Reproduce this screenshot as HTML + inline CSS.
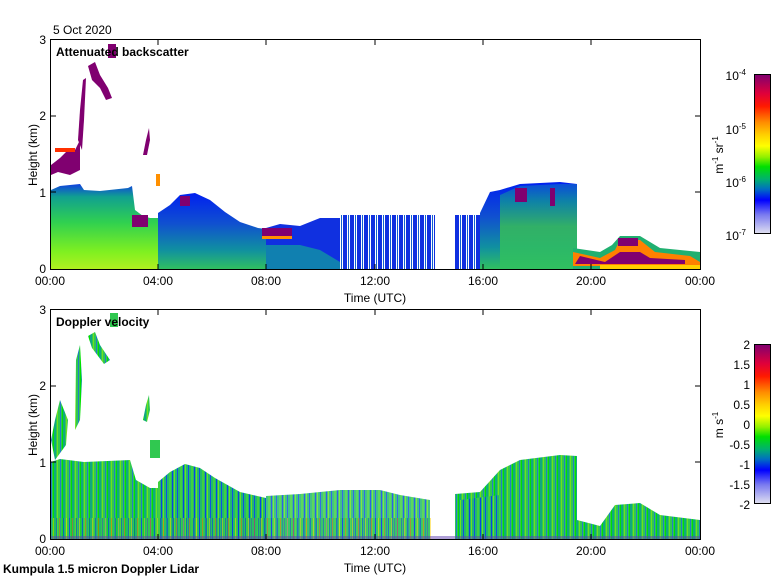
<!DOCTYPE html>
<html><head><meta charset="utf-8"><style>
html,body{margin:0;padding:0;background:#fff;width:780px;height:580px;overflow:hidden}
svg{display:block;font-family:"Liberation Sans",sans-serif}
</style></head><body>
<svg width="780" height="580" viewBox="0 0 780 580" xmlns="http://www.w3.org/2000/svg">
<defs>
<linearGradient id="cb" x1="0" y1="0" x2="0" y2="1">
<stop offset="0" stop-color="#800070"/><stop offset="0.12" stop-color="#e0003a"/><stop offset="0.2" stop-color="#ff1a00"/><stop offset="0.3" stop-color="#ff8c00"/><stop offset="0.38" stop-color="#ffd000"/><stop offset="0.45" stop-color="#ffff00"/><stop offset="0.52" stop-color="#90f000"/><stop offset="0.58" stop-color="#00e000"/><stop offset="0.66" stop-color="#00b070"/><stop offset="0.72" stop-color="#0070c0"/><stop offset="0.79" stop-color="#0000ff"/><stop offset="0.88" stop-color="#7878f0"/><stop offset="1" stop-color="#e0e0f0"/>
</linearGradient>
<linearGradient id="g1" x1="0" y1="0" x2="0" y2="1">
<stop offset="0" stop-color="#1040e0"/><stop offset="0.15" stop-color="#10a090"/><stop offset="0.45" stop-color="#30d050"/><stop offset="0.8" stop-color="#80f020"/><stop offset="1" stop-color="#b0f020"/>
</linearGradient>
<linearGradient id="g2" x1="0" y1="0" x2="0" y2="1">
<stop offset="0" stop-color="#0020f0"/><stop offset="0.4" stop-color="#1050d0"/><stop offset="0.75" stop-color="#1090a0"/><stop offset="1" stop-color="#30c060"/>
</linearGradient>
<linearGradient id="g3" x1="0" y1="0" x2="0" y2="1">
<stop offset="0" stop-color="#1060d0"/><stop offset="0.2" stop-color="#10a090"/><stop offset="0.5" stop-color="#40d040"/><stop offset="1" stop-color="#30c060"/>
</linearGradient>
<pattern id="sparse" width="7" height="230" patternUnits="userSpaceOnUse">
<rect width="4" height="230" fill="#1030e0"/>
<rect x="5" width="1" height="230" fill="#1060d0"/>
</pattern>
<pattern id="st" width="9" height="230" patternUnits="userSpaceOnUse">
<rect width="9" height="230" fill="#30c850"/>
<rect x="0" width="2" height="230" fill="#10a880"/>
<rect x="3" width="1" height="230" fill="#70e020"/>
<rect x="6" width="1" height="230" fill="#2080c0"/>
<rect x="8" width="1" height="230" fill="#00e000"/>
</pattern>
<pattern id="st2" width="11" height="230" patternUnits="userSpaceOnUse">
<rect width="11" height="230" fill="#20b870"/>
<rect x="1" width="1" height="230" fill="#1050e0"/>
<rect x="4" width="2" height="230" fill="#40d040"/>
<rect x="7" width="1" height="230" fill="#1040e0"/>
<rect x="9" width="1" height="230" fill="#70e020"/>
</pattern>
<pattern id="lowb" width="13" height="10" patternUnits="userSpaceOnUse">
<rect width="13" height="10" fill="#30c850"/>
<rect x="1" width="1" height="10" fill="#ffd000"/>
<rect x="4" width="1" height="10" fill="#0030f0"/>
<rect x="7" width="1" height="10" fill="#ff6000"/>
<rect x="11" width="1" height="10" fill="#0030f0"/>
</pattern>
</defs>

<!-- TOP PLOT -->
<text x="53" y="34" font-size="12">5 Oct 2020</text>
<g>
<polygon points="51,269 51,190 60,186 80,184 84,190 100,191 128,188 132,186 135,210 143,216 150,218 158,218 158,269" fill="url(#g1)"/>
<polygon points="158,269 158,213 170,205 180,195 195,193 210,200 225,212 240,222 258,228 266,229 266,269" fill="url(#g2)"/>
<polygon points="266,269 266,228 280,224 300,226 320,218 340,218 340,269" fill="#1030e0"/>
<polygon points="266,269 266,245 300,245 320,250 340,262 340,269" fill="#1080b0"/>
<rect x="340" y="215" width="95" height="54" fill="url(#sparse)"/>
<rect x="262" y="228" width="30" height="8" fill="#800070"/>
<rect x="262" y="236" width="30" height="3" fill="#ff9000"/>
<rect x="455" y="215" width="30" height="54" fill="url(#sparse)"/>
<polygon points="480,269 480,213 490,192 500,190 520,184 560,182 577,184 577,269" fill="url(#g2)"/>
<polygon points="500,269 500,195 520,186 560,184 577,184 577,269" fill="url(#g3)" opacity="0.7"/>
<rect x="515" y="188" width="12" height="14" fill="#800070"/>
<rect x="550" y="188" width="5" height="18" fill="#800070"/>
<polygon points="573,269 573,248 600,252 612,245 620,236 640,236 660,248 700,252 700,269" fill="#20b070"/>
<polygon points="573,266 573,252 600,258 615,250 620,240 640,240 655,252 690,256 700,262 700,266" fill="#ff8000"/>
<polygon points="575,264 580,256 605,262 620,252 640,252 650,258 685,260 685,264" fill="#800070"/>
<rect x="618" y="238" width="20" height="8" fill="#800070"/>
<rect x="600" y="265" width="100" height="4" fill="#ffd000"/>
<polygon points="51,165 60,158 66,152 75,150 80,140 80,170 70,175 58,172 51,175" fill="#800070"/>
<rect x="55" y="148" width="20" height="4" fill="#ff3000"/>
<polygon points="78,140 80,110 83,80 86,78 84,120 82,150" fill="#800070"/>
<polygon points="88,66 95,62 100,75 108,88 112,98 106,100 100,88 92,80" fill="#800070"/>
<rect x="108" y="44" width="8" height="14" fill="#800070"/>
<polygon points="143,155 146,140 149,128 150,140 147,155" fill="#800070"/>
<rect x="156" y="174" width="4" height="12" fill="#ff9000"/>
<rect x="132" y="215" width="16" height="12" fill="#800070"/>
<rect x="180" y="196" width="10" height="10" fill="#800070"/>
</g>
<rect x="50.5" y="39.5" width="650" height="230" fill="none" stroke="#000"/>
<text x="56" y="56" font-size="12" font-weight="bold">Attenuated backscatter</text>
<g stroke="#000">
<line x1="158" y1="269" x2="158" y2="264"/><line x1="266" y1="269" x2="266" y2="264"/><line x1="375" y1="269" x2="375" y2="264"/><line x1="483" y1="269" x2="483" y2="264"/><line x1="591" y1="269" x2="591" y2="264"/>
<line x1="158" y1="40" x2="158" y2="45"/><line x1="266" y1="40" x2="266" y2="45"/><line x1="375" y1="40" x2="375" y2="45"/><line x1="483" y1="40" x2="483" y2="45"/><line x1="591" y1="40" x2="591" y2="45"/>
<line x1="51" y1="192" x2="56" y2="192"/><line x1="51" y1="116" x2="56" y2="116"/>
<line x1="700" y1="192" x2="695" y2="192"/><line x1="700" y1="116" x2="695" y2="116"/>
</g>
<g font-size="12" text-anchor="end">
<text x="46" y="273">0</text><text x="46" y="197">1</text><text x="46" y="120">2</text><text x="46" y="44">3</text>
</g>
<text transform="translate(37,155) rotate(-90)" font-size="12" text-anchor="middle">Height (km)</text>
<g font-size="12" text-anchor="middle">
<text x="50" y="285">00:00</text><text x="158" y="285">04:00</text><text x="266" y="285">08:00</text><text x="375" y="285">12:00</text><text x="483" y="285">16:00</text><text x="591" y="285">20:00</text><text x="700" y="285">00:00</text>
<text x="375" y="302">Time (UTC)</text>
</g>
<rect x="754.5" y="74.5" width="16" height="159" fill="url(#cb)" stroke="#000"/>
<g font-size="12" text-anchor="end">
<text x="746" y="80">10<tspan font-size="8" dy="-5">-4</tspan></text>
<text x="746" y="134">10<tspan font-size="8" dy="-5">-5</tspan></text>
<text x="746" y="187">10<tspan font-size="8" dy="-5">-6</tspan></text>
<text x="746" y="240">10<tspan font-size="8" dy="-5">-7</tspan></text>
</g>
<text transform="translate(723,155) rotate(-90)" font-size="12" text-anchor="middle">m<tspan font-size="8" dy="-5">-1</tspan><tspan dy="5"> sr</tspan><tspan font-size="8" dy="-5">-1</tspan></text>

<!-- BOTTOM PLOT -->
<g>
<polygon points="51,539 51,462 60,459 84,462 130,460 136,480 150,488 158,488 158,539" fill="url(#st)"/>
<polygon points="158,539 158,482 170,472 185,464 200,468 215,478 240,492 266,498 266,539" fill="url(#st2)"/>
<polygon points="266,539 266,496 300,494 340,490 380,490 400,495 430,500 430,539" fill="url(#st2)" opacity="0.85"/>
<polygon points="455,539 455,494 480,492 500,470 520,460 560,455 577,456 577,539" fill="url(#st)"/>
<polygon points="460,539 460,500 500,495 500,539" fill="url(#st2)"/>
<polygon points="577,539 577,520 600,526 615,505 640,503 660,515 700,520 700,539" fill="url(#st)"/>
<rect x="51" y="518" width="380" height="21" fill="url(#lowb)" opacity="0.5"/>
<rect x="51" y="536" width="649" height="3" fill="#6040b0" opacity="0.5"/>
<polygon points="51,440 55,420 60,400 68,420 66,445 55,460" fill="url(#st)"/>
<polygon points="76,360 80,345 82,380 80,420 75,430" fill="url(#st)"/>
<polygon points="88,336 95,332 100,345 110,360 104,364 92,348" fill="url(#st)"/>
<rect x="110" y="313" width="8" height="14" fill="#30c850"/>
<polygon points="143,420 146,405 149,395 150,410 147,422" fill="url(#st)"/>
<rect x="150" y="440" width="10" height="18" fill="#30c850"/>
</g>
<rect x="50.5" y="309.5" width="650" height="230" fill="none" stroke="#000"/>
<text x="56" y="326" font-size="12" font-weight="bold">Doppler velocity</text>
<g stroke="#000">
<line x1="158" y1="539" x2="158" y2="534"/><line x1="266" y1="539" x2="266" y2="534"/><line x1="375" y1="539" x2="375" y2="534"/><line x1="483" y1="539" x2="483" y2="534"/><line x1="591" y1="539" x2="591" y2="534"/>
<line x1="158" y1="310" x2="158" y2="315"/><line x1="266" y1="310" x2="266" y2="315"/><line x1="375" y1="310" x2="375" y2="315"/><line x1="483" y1="310" x2="483" y2="315"/><line x1="591" y1="310" x2="591" y2="315"/>
<line x1="51" y1="462" x2="56" y2="462"/><line x1="51" y1="386" x2="56" y2="386"/>
<line x1="700" y1="462" x2="695" y2="462"/><line x1="700" y1="386" x2="695" y2="386"/>
</g>
<g font-size="12" text-anchor="end">
<text x="46" y="543">0</text><text x="46" y="467">1</text><text x="46" y="390">2</text><text x="46" y="314">3</text>
</g>
<text transform="translate(37,425) rotate(-90)" font-size="12" text-anchor="middle">Height (km)</text>
<g font-size="12" text-anchor="middle">
<text x="50" y="555">00:00</text><text x="158" y="555">04:00</text><text x="266" y="555">08:00</text><text x="375" y="555">12:00</text><text x="483" y="555">16:00</text><text x="591" y="555">20:00</text><text x="700" y="555">00:00</text>
<text x="375" y="572">Time (UTC)</text>
</g>
<text x="3" y="573" font-size="12" font-weight="bold">Kumpula 1.5 micron Doppler Lidar</text>
<rect x="754.5" y="344.5" width="16" height="159" fill="url(#cb)" stroke="#000"/>
<g font-size="12" text-anchor="end">
<text x="750" y="349">2</text><text x="750" y="369">1.5</text><text x="750" y="389">1</text><text x="750" y="409">0.5</text><text x="750" y="429">0</text><text x="750" y="449">-0.5</text><text x="750" y="469">-1</text><text x="750" y="489">-1.5</text><text x="750" y="509">-2</text>
</g>
<text transform="translate(723,425) rotate(-90)" font-size="12" text-anchor="middle">m s<tspan font-size="8" dy="-5">-1</tspan></text>
</svg>
</body></html>
